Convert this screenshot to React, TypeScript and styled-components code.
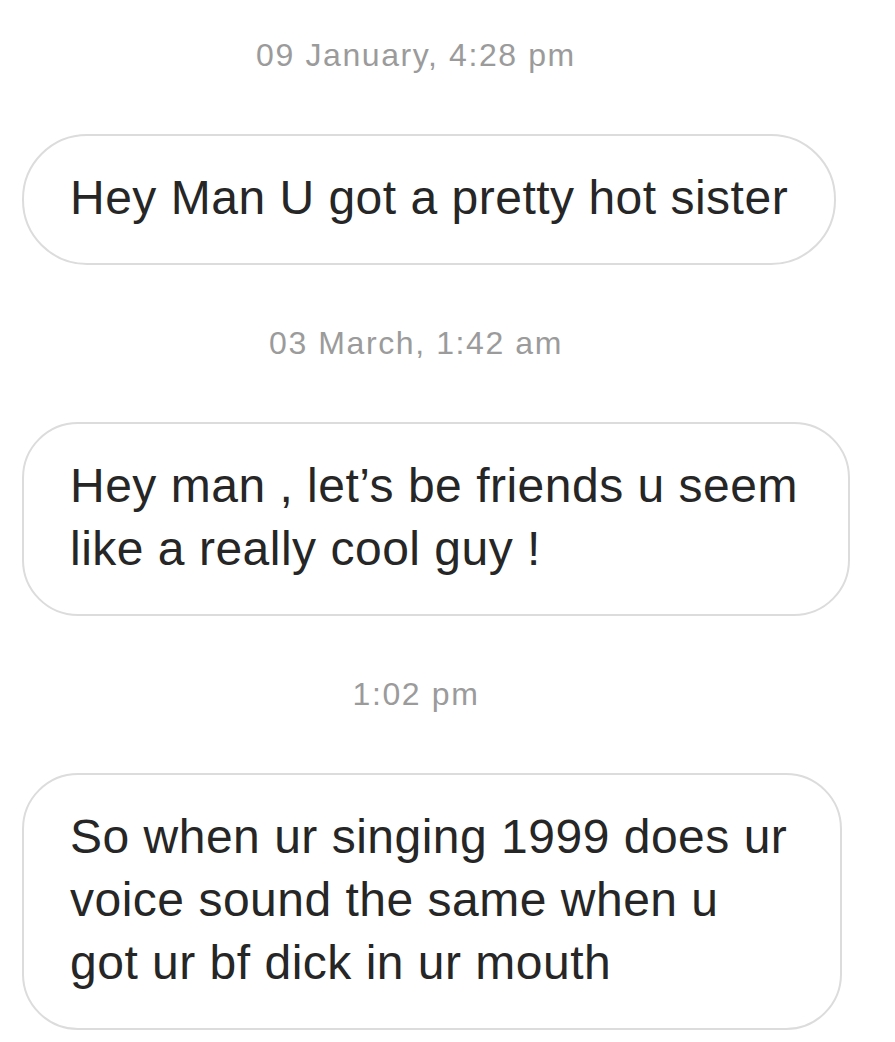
import styled, { createGlobalStyle } from "styled-components";

const GlobalStyle = createGlobalStyle`
  html, body {
    margin: 0;
    padding: 0;
    background: #ffffff;
  }
  body {
    font-family: "Liberation Sans", Arial, sans-serif;
    -webkit-font-smoothing: antialiased;
  }
`;

const Thread = styled.div`
  display: flex;
  flex-direction: column;
  gap: 58px;
  width: 832px;
  padding: 35px 0 0 0;
`;

const Group = styled.div`
  display: flex;
  flex-direction: column;
  gap: 59px;
`;

const Timestamp = styled.div`
  text-align: center;
  font-size: 32px;
  line-height: 40px;
  letter-spacing: 1.6px;
  color: #9b9b9b;
`;

const Bubble = styled.div<{ $width: number; $radius: number }>`
  box-sizing: border-box;
  width: ${(p) => p.$width}px;
  margin-left: 22px;
  padding: 30px 38px 34px 46px;
  border: 2px solid #dcdcdc;
  border-radius: ${(p) => p.$radius}px;
  background: #ffffff;
  color: #262626;
  font-size: 48px;
  line-height: 63px;
  letter-spacing: 0.5px;
  white-space: nowrap;
`;

type Message = {
  time: string;
  lines: string[];
  width: number;
};

const messages: Message[] = [
  {
    time: "09 January, 4:28 pm",
    lines: ["Hey Man U got a pretty hot sister"],
    width: 814,
  },
  {
    time: "03 March, 1:42 am",
    lines: ["Hey man , let’s be friends u seem", "like a really cool guy !"],
    width: 828,
  },
  {
    time: "1:02 pm",
    lines: [
      "So when ur singing 1999 does ur",
      "voice sound the same when u",
      "got ur bf dick in ur mouth",
    ],
    width: 820,
  },
];

export default function App() {
  return (
    <>
      <GlobalStyle />
      <Thread>
        {messages.map((m) => (
          <Group key={m.time}>
            <Timestamp>{m.time}</Timestamp>
            <Bubble $width={m.width} $radius={m.lines.length > 1 ? 56 : 65}>
              {m.lines.map((line, i) => (
                <div key={i}>{line}</div>
              ))}
            </Bubble>
          </Group>
        ))}
      </Thread>
    </>
  );
}
